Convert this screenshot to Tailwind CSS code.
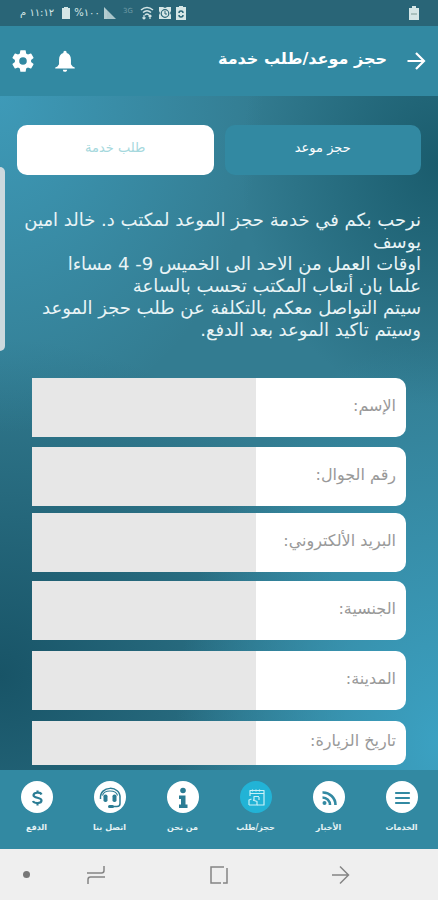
<!DOCTYPE html>
<html lang="ar" dir="rtl">
<head>
<meta charset="utf-8">
<meta name="viewport" content="width=device-width, initial-scale=1">
<title>حجز موعد/طلب خدمة</title>
<script src="https://cdn.jsdelivr.net/npm/@tailwindcss/browser@4"></script>
</head>
<body class="flex h-screen flex-col overflow-hidden bg-[#2f7b91] font-['DejaVu_Sans',sans-serif] text-white">
  <div dir="ltr" class="flex h-[26px] shrink-0 items-center justify-between bg-[#296577] pr-[19px] pl-5 text-[#d5e6e6]">
    <div class="flex items-center gap-1 text-[10px] leading-4">
      <span dir="rtl" class="whitespace-nowrap">١١:١٢ م</span>
      <svg class="ml-1 h-3 w-2" viewBox="0 0 8 12" fill="currentColor"><path d="M2 0h4v1h2v11H0V1h2z"/></svg>
      <span class="whitespace-nowrap">%١٠٠</span>
      <svg class="h-3 w-3" viewBox="0 0 12 12" fill="currentColor"><path d="M0 0l3 3v9H0z" opacity=".8"/><path d="M3 3l9 9H3z" opacity=".75"/></svg>
      <span class="w-4 pb-1 text-center text-[7px] leading-3 text-[#6f9ba6]">3G</span>
      <svg class="h-[14px] w-[14px]" viewBox="0 0 14 14" fill="none" stroke="currentColor" stroke-width="1.6"><path d="M1 4Q7-1 13 4M3 6.500Q7 3 11 6.500M5 9Q7 7 9 9"/><path d="M4 9v4M2.500 11.500L4 13l1.500-1.500M10 13V9M8.500 10.500L10 9l1.500 1.500" stroke-width="1.200"/></svg>
      <svg class="h-[14px] w-[14px]" viewBox="0 0 14 14"><path d="M1 1h4l2 1 2-1h4v4l-1 2 1 2v4H1V9l1-2-1-2z" fill="currentColor"/><circle cx="7" cy="7.500" r="3.800" fill="none" stroke="#296577" stroke-width="1.200"/><path d="M7 5v3h2" fill="none" stroke="#296577"/></svg>
      <svg class="h-[14px] w-[10px]" viewBox="0 0 10 14"><path d="M3 0h4v1h3v13H0V1h3z" fill="currentColor"/><path d="M3 7a2 2 0 0 1 4 0M7 9a2 2 0 0 1-4 0" fill="none" stroke="#296577" stroke-width="1.500"/></svg>
    </div>
    <svg class="h-[14px] w-[10px]" viewBox="0 0 10 14" fill="currentColor"><path d="M3 0h4v2h3v12H0V2h3z"/><path d="M2 7h6v2H2z" fill="#a8c0bd"/></svg>
  </div>

  <header class="flex h-[70px] shrink-0 items-center bg-[#3289a2] px-[10px]">
    <button type="button" aria-label="رجوع" class="flex h-6 w-6 items-center justify-center">
      <svg class="h-6 w-6" viewBox="0 0 24 24" fill="none" stroke="white" stroke-width="2.200"><path d="M3.500 12h16M12 4l8 8-8 8"/></svg>
    </button>
    <h1 class="mr-[17px] pb-[5px] text-base leading-6 font-bold whitespace-nowrap">حجز موعد/طلب خدمة</h1>
    <button type="button" aria-label="الإشعارات" class="mr-auto flex h-[26px] w-[26px] items-center justify-center">
      <svg class="h-[26px] w-[26px]" viewBox="0 0 24 24" fill="white"><path d="M12 22c1.100 0 2-.9 2-2h-4a2 2 0 0 0 2 2zm7-5l-1.500-2v-4c0-3.500-1.500-5.640-4-6.320V4a1.500 1.500 0 0 0-3 0v.68C8 5.360 6.500 7.500 6.500 11v4L5 17l-2 1v1h18v-1z"/></svg>
    </button>
    <button type="button" aria-label="الإعدادات" class="mr-4 flex h-[26px] w-[26px] items-center justify-center">
      <svg class="h-[26px] w-[26px]" viewBox="0 0 24 24" fill="white"><path d="M19.430 12.980c.04-.32.07-.64.07-.98s-.03-.66-.07-.98l2.110-1.650a.5.5 0 0 0 .12-.64l-2-3.460a.5.5 0 0 0-.61-.22l-2.490 1a7.300 7.300 0 0 0-1.690-.98l-.38-2.650A.49.49 0 0 0 14 2h-4a.49.49 0 0 0-.49.42l-.38 2.650c-.61.25-1.170.59-1.690.98l-2.490-1a.5.5 0 0 0-.61.22l-2 3.460a.5.5 0 0 0 .12.64l2.110 1.650c-.04.32-.07.65-.07.98s.03.66.07.98l-2.110 1.650a.5.5 0 0 0-.12.64l2 3.460c.12.22.39.3.61.22l2.490-1c.52.4 1.080.73 1.690.98l.38 2.650c.03.24.24.42.49.42h4c.25 0 .46-.18.49-.42l.38-2.650c.61-.25 1.170-.59 1.690-.98l2.490 1c.23.09.49 0 .61-.22l2-3.460a.5.5 0 0 0-.12-.64zM12 15.500a3.500 3.500 0 1 1 0-7 3.500 3.500 0 0 1 0 7z"/></svg>
    </button>
  </header>

  <main class="relative min-h-0 flex-1 overflow-hidden bg-[radial-gradient(ellipse_60%_50%_at_0%_0%,#3e9ab8_0%,#3e9ab800_100%),radial-gradient(ellipse_45%_36%_at_100%_10%,#1a5c6d_0%,#1a5c6d00_100%),radial-gradient(ellipse_60%_60%_at_100%_96%,#3ba1c2_0%,#3ba1c200_100%),radial-gradient(ellipse_80%_50%_at_0%_86%,#185467_0%,#18546700_100%)] bg-[#337c91] pt-[29px]">
    <div class="absolute top-[71px] left-0 h-[184px] w-[5px] rounded-r-md bg-[#ccd9de]"></div>
    <div class="flex gap-[11px] px-[17px] text-[13px]">
      <button type="button" class="h-[50px] flex-1 rounded-[10px] bg-[#3289a2] pb-1">حجز موعد</button>
      <button type="button" class="h-[50px] flex-1 rounded-[10px] bg-white pb-1 text-[#a5d8dd]">طلب خدمة</button>
    </div>
    <p class="mt-[34px] px-[17px] text-lg leading-[22px] text-[#e9f4f6]">نرحب بكم في خدمة حجز الموعد لمكتب د. خالد امين يوسف<br>اوقات العمل من الاحد الى الخميس 9- 4 مساءا<br>علما بان أتعاب المكتب تحسب بالساعة<br>سيتم التواصل معكم بالتكلفة عن طلب حجز الموعد وسيتم تاكيد الموعد بعد الدفع.</p>
    <form class="mt-[37px] px-8 text-base text-[#999]">
      <div class="mb-[10px] flex h-[59px] overflow-hidden rounded-r-[10px] bg-white">
        <label for="name" class="w-2/5 pt-4 pr-[10px] leading-6 whitespace-nowrap">الإسم:</label><input id="name" type="text" class="w-3/5 bg-[#e7e7e7] px-2 outline-none">
      </div>
      <div class="mb-[7px] flex h-[59px] overflow-hidden rounded-r-[10px] bg-white">
        <label for="phone" class="w-2/5 pt-4 pr-[10px] leading-6 whitespace-nowrap">رقم الجوال:</label><input id="phone" type="tel" class="w-3/5 bg-[#e7e7e7] px-2 outline-none">
      </div>
      <div class="mb-[9px] flex h-[59px] overflow-hidden rounded-r-[10px] bg-white">
        <label for="email" class="w-2/5 pt-4 pr-[10px] leading-6 whitespace-nowrap">البريد الألكتروني:</label><input id="email" type="email" class="w-3/5 bg-[#e7e7e7] px-2 outline-none">
      </div>
      <div class="mb-[11px] flex h-[59px] overflow-hidden rounded-r-[10px] bg-white">
        <label for="nationality" class="w-2/5 pt-4 pr-[10px] leading-6 whitespace-nowrap">الجنسية:</label><input id="nationality" type="text" class="w-3/5 bg-[#e7e7e7] px-2 outline-none">
      </div>
      <div class="mb-[11px] flex h-[59px] overflow-hidden rounded-r-[10px] bg-white">
        <label for="city" class="w-2/5 pt-4 pr-[10px] leading-6 whitespace-nowrap">المدينة:</label><input id="city" type="text" class="w-3/5 bg-[#e7e7e7] px-2 outline-none">
      </div>
      <div class="flex h-11 overflow-hidden rounded-r-[10px] bg-white">
        <label for="date" class="w-2/5 pt-2 pr-[10px] leading-6 whitespace-nowrap">تاريخ الزيارة:</label><input id="date" type="text" class="w-3/5 bg-[#e7e7e7] px-2 outline-none">
      </div>
    </form>
  </main>

  <nav class="grid h-[79px] shrink-0 grid-cols-6 bg-[#3289a2] pt-[11px] text-[8px] leading-4 font-bold text-[#e6f3f5]">
    <a href="#services" class="flex flex-col items-center gap-[7px] whitespace-nowrap">
      <svg class="h-8 w-8" viewBox="0 0 32 32"><circle cx="16" cy="16" r="16" fill="white"/><path d="M10 12h13M10 17h13M10 22h13" stroke="#3289a2" stroke-width="2.200" stroke-linecap="round"/></svg>الخدمات</a>
    <a href="#news" class="flex flex-col items-center gap-[7px] whitespace-nowrap">
      <svg class="h-8 w-8" viewBox="0 0 32 32"><circle cx="16" cy="16" r="16" fill="white"/><circle cx="11.500" cy="22" r="2" fill="#3289a2"/><path d="M9.500 16.500a7.500 7.500 0 0 1 7.500 7.500M9.500 11.500A12.500 12.500 0 0 1 22.500 24" fill="none" stroke="#3289a2" stroke-width="2.600"/></svg>الأخبار</a>
    <a href="#booking" aria-current="page" class="flex flex-col items-center gap-[7px] whitespace-nowrap">
      <svg class="h-8 w-8" viewBox="0 0 32 32"><circle cx="16" cy="16" r="16" fill="#22b3d6"/><g fill="none" stroke="#c9f0f7" stroke-width="1.200" stroke-linejoin="round"><path d="M10 15V9.500h14V24h-7M10 12.500h14M12.500 8.500v2M16 8.500v2M19.500 8.500v2"/><path d="M9 24v-5l2.500-1M14 20v-4.500h5M13 19l4 1.500V24H9M19 16v3"/></g></svg>حجز/طلب</a>
    <a href="#about" class="flex flex-col items-center gap-[7px] whitespace-nowrap">
      <svg class="h-8 w-8" viewBox="0 0 32 32"><circle cx="16" cy="16" r="16" fill="white"/><circle cx="16" cy="9.500" r="2.800" fill="#2b7c94"/><path d="M12 14.500h6.500v9h2V27H12v-3.500h2V18h-2z" fill="#2b7c94"/></svg>من نحن</a>
    <a href="#contact" class="flex flex-col items-center gap-[7px] whitespace-nowrap">
      <svg class="h-8 w-8" viewBox="0 0 32 32"><circle cx="16" cy="16" r="16" fill="white"/><g fill="none" stroke="#2b7c94" stroke-width="1.500"><path d="M6.500 18C5 4 27 4 26 17v5.500q0 3-3 3h-4"/><path d="M8.500 14.500C10 8.500 22 8.500 23.500 14.500" stroke-width="1.100"/></g><rect x="9.500" y="13.500" width="4" height="7.500" rx="1.800" fill="#2b7c94"/><rect x="18.500" y="13.500" width="4" height="7.500" rx="1.800" fill="#2b7c94"/><rect x="14" y="24" width="6" height="3" rx="1.500" fill="#2b7c94"/></svg>اتصل بنا</a>
    <a href="#payment" class="flex flex-col items-center gap-[7px] whitespace-nowrap">
      <svg class="h-8 w-8" viewBox="0 0 32 32"><circle cx="16" cy="16" r="16" fill="white"/><path d="M20.500 13.500C19.500 11 12.500 11 12.500 14.300c0 3.200 8 1.800 8 5.200 0 3.300-7.500 3.300-8.500.5M16.500 9.500v3M16.500 21.500v3" fill="none" stroke="#2b7c94" stroke-width="2.200"/></svg>الدفع</a>
  </nav>

  <div dir="ltr" class="flex h-[51px] shrink-0 items-center gap-14 bg-[#efefef] pr-[87px] pl-[23px] text-[#858585]">
    <span class="h-[7px] w-[7px] rounded-full bg-[#777]"></span>
    <div class="flex flex-1 items-center justify-between">
      <button type="button" aria-label="التطبيقات الأخيرة"><svg class="block h-5 w-5" viewBox="0 0 20 20" fill="none" stroke="currentColor" stroke-width="1.500"><path d="M1 8h14.500q2.500 0 2.500-2.500V1M19 12H4.500Q2 12 2 14.500V19"/></svg></button>
      <button type="button" aria-label="الرئيسية"><svg class="block h-5 w-5" viewBox="0 0 20 20" fill="none" stroke="currentColor" stroke-width="1.500"><path d="M15 2H2v16h10M14 18h4V3"/></svg></button>
      <button type="button" aria-label="عودة"><svg class="block h-5 w-5" viewBox="0 0 20 20" fill="none" stroke="currentColor" stroke-width="1.500"><path d="M1 10h16M9 1.500l8.500 8.500L9 18.500"/></svg></button>
    </div>
  </div>
</body>
</html>
